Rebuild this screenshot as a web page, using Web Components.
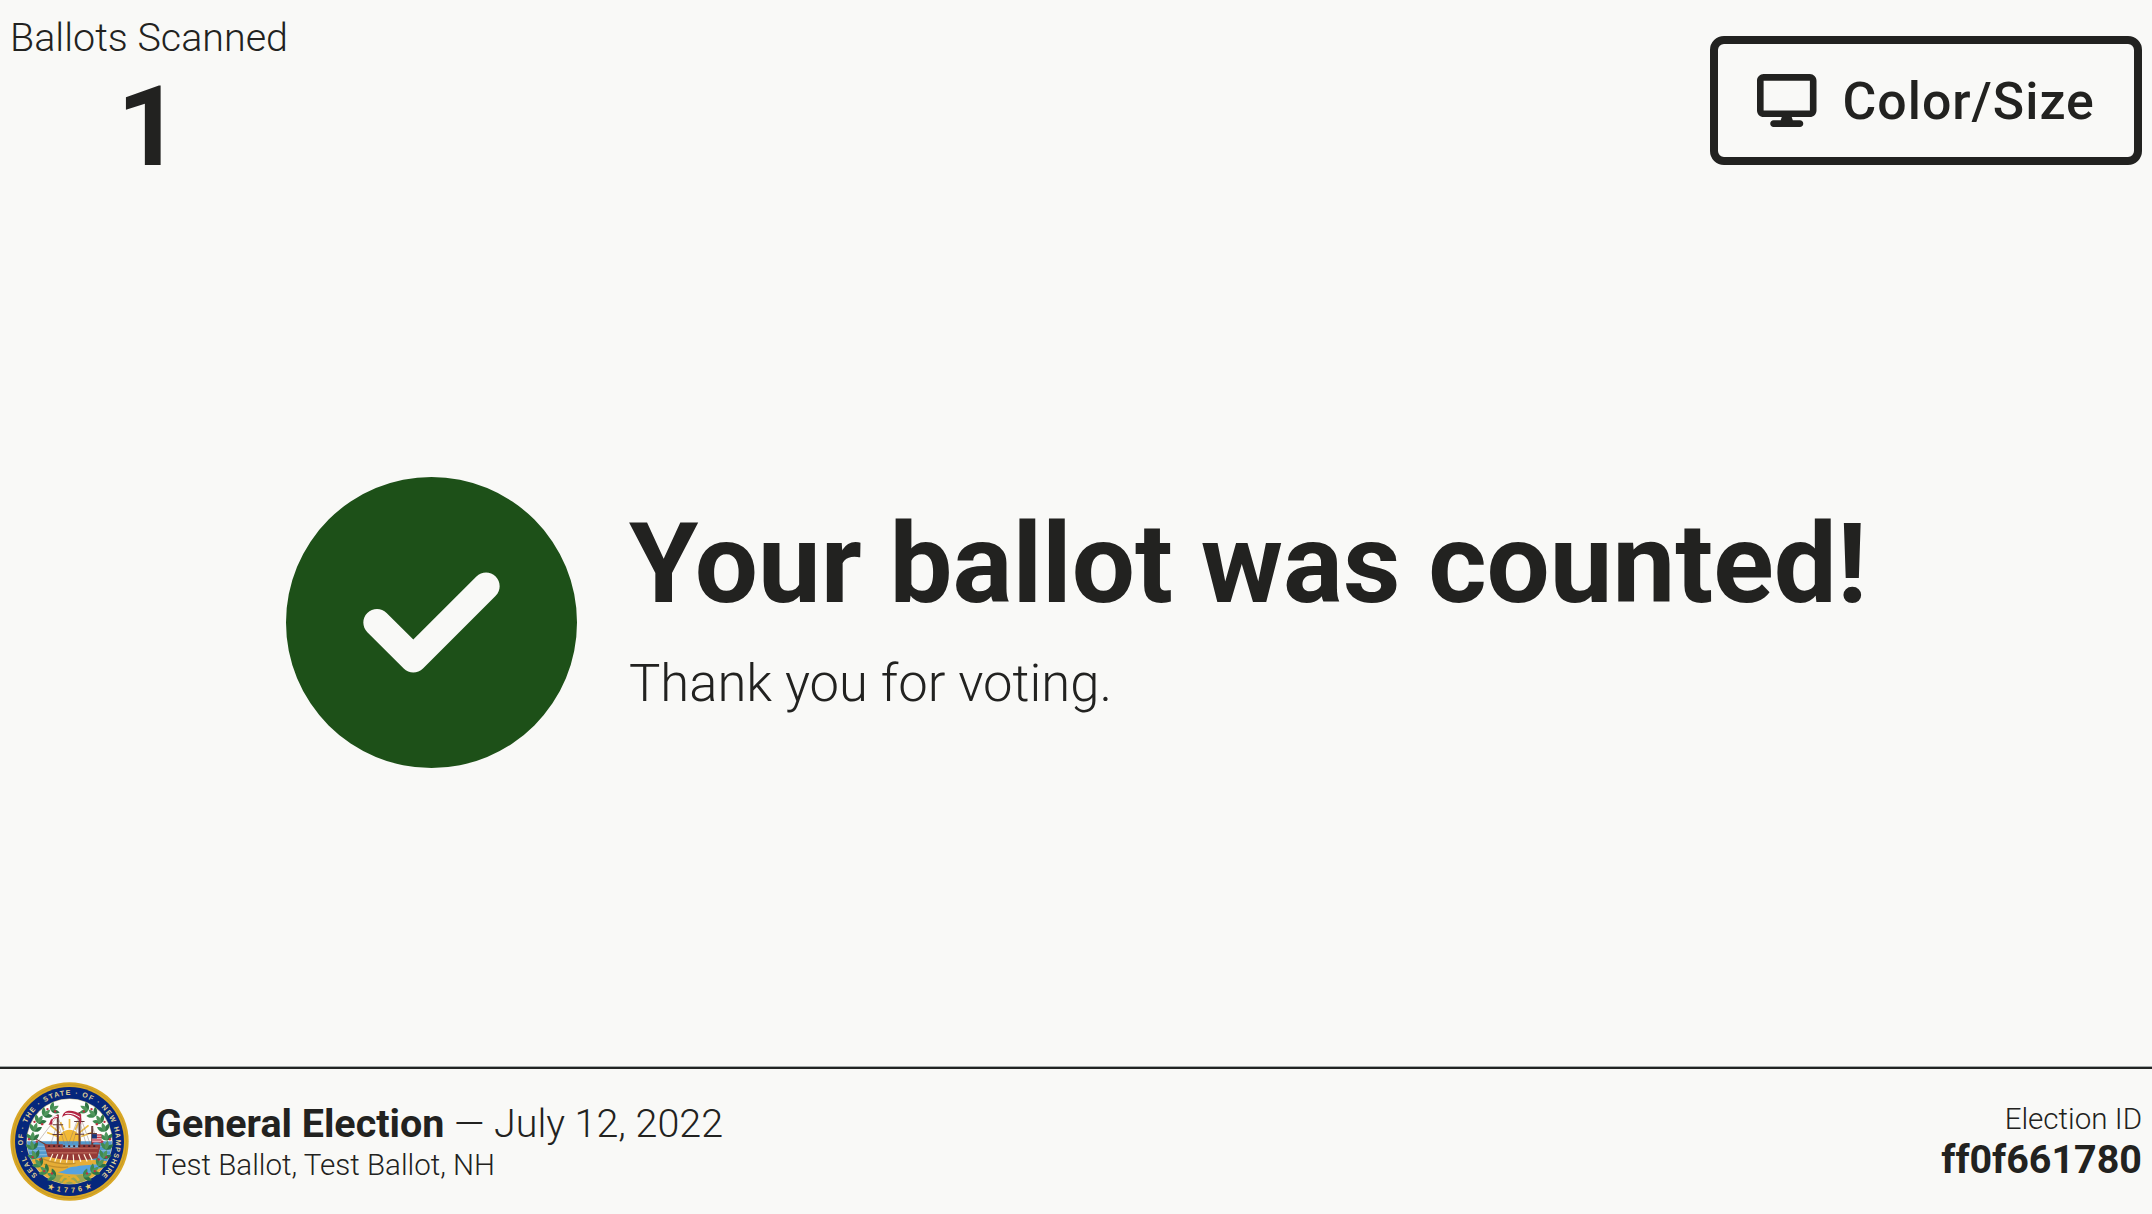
<!DOCTYPE html>
<html lang="en">
<head>
<meta charset="utf-8">
<title>Ballot Scanner</title>
<style>
html,body{margin:0;height:100%;background:#f9f9f7}
body{font-family:Roboto,"Liberation Sans",sans-serif;font-weight:300;color:#222220;overflow:hidden}
</style>
</head>
<body>
<voter-screen>
  <ballot-count slot="start" value="1">Ballots Scanned</ballot-count>
  <settings-button slot="end">Color/Size</settings-button>
  <status-message>
    <span slot="title">Your ballot was counted!</span>
    <span>Thank you for voting.</span>
  </status-message>
  <election-bar slot="footer">
    <span slot="name">General Election</span>
    <span slot="date">— July 12, 2022</span>
    <span slot="place">Test Ballot, Test Ballot, NH</span>
    <span slot="id-label">Election ID</span>
    <span slot="id">ff0f661780</span>
  </election-bar>
</voter-screen>
<script>
const define = (name, html, after) => customElements.define(name, class extends HTMLElement {
  constructor() {
    super();
    this.attachShadow({mode: "open"}).innerHTML = html;
    if (after) after.call(this);
  }
});

define("voter-screen", `
<style>
:host{display:flex;flex-direction:column;height:1214px;box-sizing:border-box}
header{display:flex;justify-content:space-between;align-items:flex-start;padding:14px 10px 0;height:166px}
main{flex:1;display:flex;justify-content:center;align-items:center}
</style>
<header><slot name="start"></slot><slot name="end"></slot></header>
<main><slot></slot></main>
<slot name="footer"></slot>`);

define("ballot-count", `
<style>
:host{display:flex;flex-direction:column;align-items:center}
.label{font-size:39.45px;line-height:47px}
.value{font-size:112px;line-height:131px;font-weight:700}
</style>
<div class="label"><slot></slot></div>
<div class="value"></div>`, function () {
  this.shadowRoot.querySelector(".value").textContent = this.getAttribute("value");
});

define("settings-button", `
<style>
:host{display:block;margin-top:22px}
button{display:flex;align-items:center;gap:26px;box-sizing:border-box;width:432px;height:129px;border:8px solid #222220;border-radius:14px;background:none;color:inherit;padding:0 0 0 39px;font:500 51.8px/62px Roboto,sans-serif;letter-spacing:1px;white-space:nowrap}
svg{width:59.5px;height:53px;flex:none;fill:currentColor}
span{padding-top:2px}
</style>
<button type="button">
<svg viewBox="0 0 576 512"><path d="M64 0C28.7 0 0 28.7 0 64V352c0 35.3 28.7 64 64 64H240l-10.7 32H160c-17.7 0-32 14.3-32 32s14.3 32 32 32H416c17.7 0 32-14.3 32-32s-14.3-32-32-32H346.7L336 416H512c35.3 0 64-28.7 64-64V64c0-35.3-28.7-64-64-64H64zM512 64V352H64V64H512z"/></svg>
<span><slot></slot></span>
</button>`);

define("status-message", `
<style>
:host{display:flex;align-items:center;gap:52px;padding:0 0 2px 1px}
svg{width:291px;height:291px;flex:none;fill:#1d5018}
.copy{display:flex;flex-direction:column;gap:21px;padding-bottom:34px}
h1{margin:0;font-size:112px;line-height:135px;font-weight:700;white-space:nowrap}
p{margin:0;font-size:52.6px;line-height:63px}
</style>
<svg viewBox="0 0 512 512"><path d="M256 512A256 256 0 1 0 256 0a256 256 0 1 0 0 512zM369 209L241 337c-9.4 9.4-24.6 9.4-33.9 0l-64-64c-9.4-9.4-9.4-24.6 0-33.9s24.6-9.4 33.9 0l47 47L335 175c9.4-9.4 24.6-9.4 33.9 0s9.4 24.6 0 33.9z"/></svg>
<div class="copy"><h1><slot name="title"></slot></h1><p><slot></slot></p></div>`);

define("state-seal", `
<style>
:host{display:block;width:119px;height:119px}
svg{display:block;width:100%;height:100%}
text{font-family:"Liberation Sans",sans-serif;font-weight:700;fill:#e2d398}
</style>
<svg viewBox="30 25 356 356">
<defs>
<path id="ring" d="M112 303.500A139 139 0 1 1 304 303.500"/>
<path id="base" d="M142 341A153 153 0 0 0 274 341"/>
<clipPath id="disc"><circle cx="208" cy="203" r="127"/></clipPath>
<path id="leaf" d="M0 0C-9-8-10-22 0-34C10-22 9-8 0 0Z"/>
</defs>
<circle cx="208" cy="203" r="177" fill="#d9a724"/>
<circle cx="208" cy="203" r="170" fill="none" stroke="#b7922d" stroke-width="2"/>
<circle cx="208" cy="203" r="163" fill="#06277c"/>
<circle cx="208" cy="203" r="129" fill="#b7b08a"/>
<circle cx="208" cy="203" r="127" fill="#fdfdfb"/>
<g clip-path="url(#disc)">
<g stroke="#efbd42" stroke-width="5"><path d="M208 163V136M191 168L181 145M225 168L235 145M179 177L151 155M237 177L265 155M173 188L141 176M243 188L275 176"/></g>
<path d="M173 206a35 38 0 0 1 70 0z" fill="#f3ba35"/>
<path d="M80 202H336V264H80z" fill="#5299cd"/>
<path d="M80 217H336M80 231H336M80 243H336" stroke="#90bfdf" stroke-width="3"/>
<path d="M80 262C132 244 179 244 228 256C260 254 292 262 336 262V334H80z" fill="#e6ad36"/>
<path d="M128 255Q182 276 226 268M132 271Q173 285 204 279" fill="none" stroke="#c38f2c" stroke-width="4"/>
<path d="M172 295C202 290 196 279 229 278C248 270 281 276 304 267L309 281C281 287 286 297 249 300Q214 305 172 295Z" fill="#55a2df"/>
<path d="M170 302Q208 310 246 302L262 334H150z" fill="#9aa552"/>
</g>
<g stroke="#653b35" fill="none">
<path d="M173 122V224M238 115V224M276 157V222" stroke-width="6"/>
<path d="M173 126L115 202L142 216M173 130L205 211L238 122L270 211M276 160L298 211M152 211L173 145L193 211M217 211L238 141L258 211" stroke-width="1.3" stroke="#8c7772"/>
<path d="M158 153H189M222 143H253M262 179H290M157 182H188M225 181H252" stroke-width="3"/>
<path d="M107 195L142 215" stroke-width="3"/>
</g>
<path d="M186 131C190 104 220 108 243 122V154L236 138C219 122 196 117 186 131ZM145 153C152 149 147 128 175 124V133Q153 130 157 152Z" fill="#b32543"/>
<path d="M195 119Q219 116 239 131M154 136Q160 127 172 128" fill="none" stroke="#fff" stroke-width="3"/>
<path d="M132 211H188V222H238V212H300V219L291 253Q216 268 143 248Z" fill="#963a37"/>
<path d="M139 223H294M142 237H290" stroke="#d68b75" stroke-width="2"/>
<path d="M144 217h145" stroke="#421e27" stroke-width="5" stroke-dasharray="6 9"/>
<path d="M158 240L149 260M173 241L164 263M188 242L180 266M203 242L199 266M219 242L221 267M235 242L242 264M251 241L261 263M267 240L276 259" stroke="#fff4dc" stroke-width="3.5"/>
<g id="wreath"></g>
<path d="M275 181H304V208Q287 202 275 208z" fill="#c53b4c"/><path d="M276 187H303M276 195H303M276 202H302" stroke="#fff" stroke-width="2.5"/><path d="M275 181h15v13h-15z" fill="#183779"/>
<path d="M181 322Q191 297 207 315Q222 296 236 321M190 328Q207 309 226 328" fill="none" stroke="#e0ae2f" stroke-width="8"/>
<text font-size="21"><textPath href="#ring" textLength="662" lengthAdjust="spacing">SEAL · OF · THE · STATE · OF · NEW HAMPSHIRE</textPath></text>
<text font-size="22"><textPath href="#base" textLength="136" lengthAdjust="spacing" fill="#eed070">★1776★</textPath></text>
</svg>`, function () {
  let out = "";
  for (const side of [-1, 1]) for (let i = 0; i < 10; i++) {
    const deg = 158 - i * 14.2;
    const a = deg * Math.PI / 180;
    const x = 208 + side * 111 * Math.sin(a), y = 206 - 111 * Math.cos(a);
    const along = side * (deg - 90);
    const leaf = (turn, fill, size) => `<use href="#leaf" fill="${fill}" transform="translate(${x} ${y}) rotate(${along + turn}) scale(${size})"/>`;
    out += leaf(-44, "#3f8a50", .8) + leaf(44, "#2f7443", .8) + leaf(0, "#4f965b", .8);
    if (i % 2) out += `<circle cx="${x + side * 10}" cy="${y - 4}" r="3.500" fill="#bd3040"/><circle cx="${x - side * 13}" cy="${y + 3}" r="3.5" fill="#bd3040"/>`;
  }
  this.shadowRoot.getElementById("wreath").innerHTML = out;
});

define("election-bar", `
<style>
:host{display:flex;align-items:center;box-sizing:border-box;height:147px;padding:0 10px;border-top:2px solid #222423;box-shadow:0 -1px #a4aaaa}
.info{display:flex;flex-direction:column;gap:1px;margin-left:26px;flex:1}
.line{font-size:39.45px;line-height:47px;white-space:pre}
.small{font-size:29.55px;line-height:35px}
b{font-weight:700}
.id{display:flex;flex-direction:column;align-items:flex-end;padding-top:2px}
.id .line{line-height:46px}
</style>
<state-seal></state-seal>
<div class="info"><div class="line"><b><slot name="name"></slot></b> <slot name="date"></slot></div><div class="small"><slot name="place"></slot></div></div>
<div class="id"><div class="small"><slot name="id-label"></slot></div><div class="line"><b><slot name="id"></slot></b></div></div>`);
</script>
</body>
</html>
